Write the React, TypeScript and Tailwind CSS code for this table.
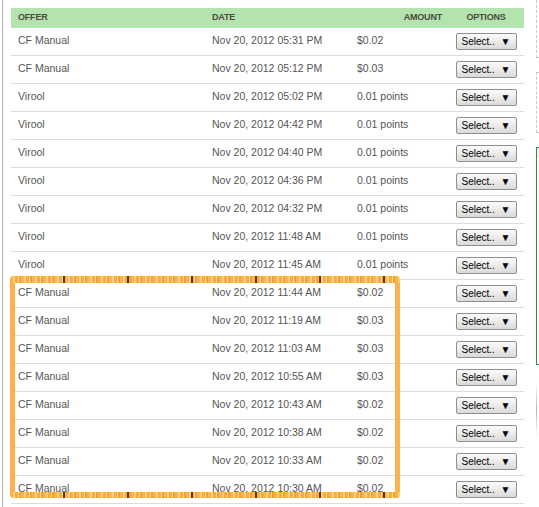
import React from 'react';

type Row = { offer: string; date: string; amount: string };

const rows: Row[] = [
  { offer: 'CF Manual', date: 'Nov 20, 2012 05:31 PM', amount: '$0.02' },
  { offer: 'CF Manual', date: 'Nov 20, 2012 05:12 PM', amount: '$0.03' },
  { offer: 'Virool', date: 'Nov 20, 2012 05:02 PM', amount: '0.01 points' },
  { offer: 'Virool', date: 'Nov 20, 2012 04:42 PM', amount: '0.01 points' },
  { offer: 'Virool', date: 'Nov 20, 2012 04:40 PM', amount: '0.01 points' },
  { offer: 'Virool', date: 'Nov 20, 2012 04:36 PM', amount: '0.01 points' },
  { offer: 'Virool', date: 'Nov 20, 2012 04:32 PM', amount: '0.01 points' },
  { offer: 'Virool', date: 'Nov 20, 2012 11:48 AM', amount: '0.01 points' },
  { offer: 'Virool', date: 'Nov 20, 2012 11:45 AM', amount: '0.01 points' },
  { offer: 'CF Manual', date: 'Nov 20, 2012 11:44 AM', amount: '$0.02' },
  { offer: 'CF Manual', date: 'Nov 20, 2012 11:19 AM', amount: '$0.03' },
  { offer: 'CF Manual', date: 'Nov 20, 2012 11:03 AM', amount: '$0.03' },
  { offer: 'CF Manual', date: 'Nov 20, 2012 10:55 AM', amount: '$0.03' },
  { offer: 'CF Manual', date: 'Nov 20, 2012 10:43 AM', amount: '$0.02' },
  { offer: 'CF Manual', date: 'Nov 20, 2012 10:38 AM', amount: '$0.02' },
  { offer: 'CF Manual', date: 'Nov 20, 2012 10:33 AM', amount: '$0.02' },
  { offer: 'CF Manual', date: 'Nov 20, 2012 10:30 AM', amount: '$0.02' },
];

const cols = 'grid grid-cols-[194px_145px_98px_76px]';

const SelectButton = () => (
  <div className="w-[61px] h-[17px] border border-[#8f8f8f] rounded-[2px] bg-linear-to-b from-[#fbfbfb] to-[#dadada] flex items-center pl-[5px] pr-[5px] text-[10px] text-black">
    <span>Select..</span>
    <span className="ml-auto text-[10px] leading-none">▼</span>
  </div>
);

const stripe =
  'bg-[image:repeating-linear-gradient(90deg,transparent_0_53px,#5a3608_53px_55px,transparent_55px_64px),repeating-linear-gradient(90deg,#fbb447_0_3px,#fdd07a_3px_5px,#f8ae3c_5px_8px,#ffdb8c_8px_9px,#f5a22a_9px_11px)]';

export default function App() {
  return (
    <div className="w-[539px] h-[507px] overflow-hidden bg-white flex font-['Liberation_Sans',Arial,sans-serif]">
      <div className="ml-[2px] h-full border-l border-[#b3b3b3] pl-[8px] pt-[8px] shrink-0">
        <div className="relative w-[513px]">
          <div className={`${cols} h-[20px] bg-[#b4e4ae] items-center text-[9px] font-bold tracking-[-0.2px] text-[#4b4b40]`}>
            <div className="pl-[7px]">OFFER</div>
            <div className="pl-[7px]">DATE</div>
            <div className="text-right pr-[6px]">AMOUNT</div>
            <div className="text-center">OPTIONS</div>
          </div>
          {rows.map((r, i) => (
            <div key={i} className={`${cols} h-[28px] border-b border-[#dcdcdc] items-center text-[10.5px] text-[#555]`}>
              <div className="pl-[7px] pb-[2px]">{r.offer}</div>
              <div className="pl-[7px] pb-[2px]">{r.date}</div>
              <div className="pl-[7px] pb-[2px]">{r.amount}</div>
              <div className="flex justify-center">
                <SelectButton />
              </div>
            </div>
          ))}

          {/* highlight marker drawn over the lower rows */}
          <div className="absolute left-[-1px] top-[268px] w-[390px] h-[222px] border-x-[5px] border-[#fbb24c] rounded-[4px] pointer-events-none">
            <div className={`absolute left-[-5px] right-[-5px] top-0 h-[7px] rounded-t-[4px] ${stripe}`} />
            <div className={`absolute left-[-5px] right-[-5px] bottom-0 h-[6px] rounded-b-[4px] ${stripe}`} />
          </div>
        </div>
      </div>

      <div className="ml-[12px] w-[200px] shrink-0">
        <div className="h-[58px] border border-t-0 border-dashed border-[#c8c8c8]" />
        <div className="mt-[14px] h-[61px] border border-dashed border-[#c8c8c8]" />
        <div className="mt-[14px] h-[218px] border border-[#2f922f]">
          <div className="h-[10px] bg-[#efefef]" />
        </div>
        <div className="mt-[18px] w-px h-[54px] bg-linear-to-b from-transparent via-[#b5b5b5] to-transparent" />
      </div>
    </div>
  );
}
